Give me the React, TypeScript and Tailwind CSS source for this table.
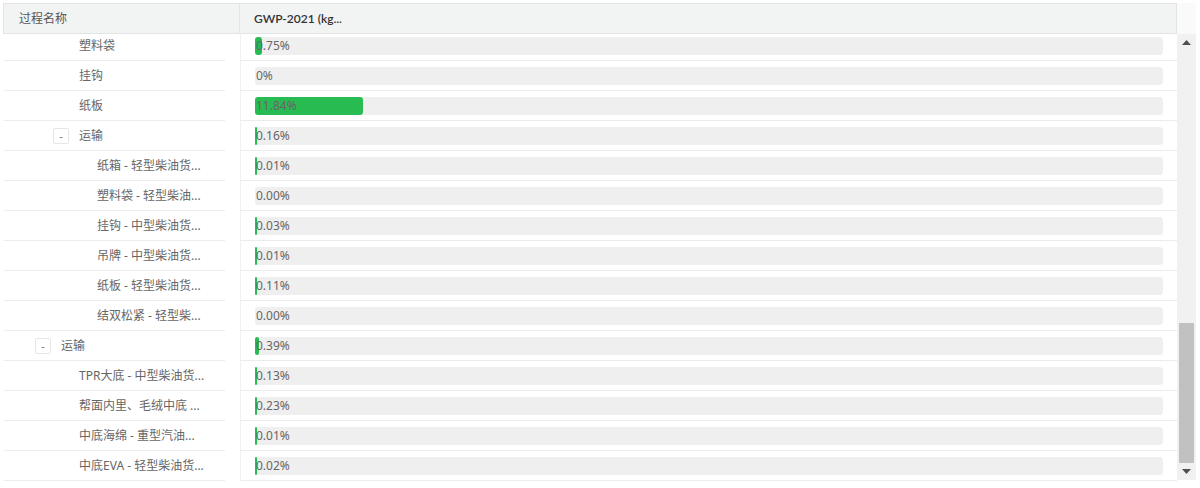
import React from "react";

type Row = { name: string; left: number; toggle?: boolean; pct: string };

const rows: Row[] = [
  { name: "塑料袋", left: 79, pct: "0.75%" },
  { name: "挂钩", left: 79, pct: "0%" },
  { name: "纸板", left: 79, pct: "11.84%" },
  { name: "运输", left: 53, toggle: true, pct: "0.16%" },
  { name: "纸箱 - 轻型柴油货...", left: 97, pct: "0.01%" },
  { name: "塑料袋 - 轻型柴油...", left: 97, pct: "0.00%" },
  { name: "挂钩 - 中型柴油货...", left: 97, pct: "0.03%" },
  { name: "吊牌 - 中型柴油货...", left: 97, pct: "0.01%" },
  { name: "纸板 - 轻型柴油货...", left: 97, pct: "0.11%" },
  { name: "结双松紧 - 轻型柴...", left: 97, pct: "0.00%" },
  { name: "运输", left: 35, toggle: true, pct: "0.39%" },
  { name: "TPR大底 - 中型柴油货...", left: 79, pct: "0.13%" },
  { name: "帮面内里、毛绒中底 ...", left: 79, pct: "0.23%" },
  { name: "中底海绵 - 重型汽油...", left: 79, pct: "0.01%" },
  { name: "中底EVA - 轻型柴油货...", left: 79, pct: "0.02%" },
];

const BAR_W = 908;

function NameCell({ r }: { r: Row }) {
  const indent = r.left - 4;
  return (
    <div className="w-[236px] shrink-0 h-full">
      <div className="w-[221px] h-full border-b border-[#ececec] flex items-center overflow-hidden whitespace-nowrap">
        {r.toggle ? (
          <div className="flex items-center" style={{ paddingLeft: indent }}>
            <span className="w-[16px] h-[16px] border border-[#e6e6e6] rounded-[2px] flex items-center justify-center text-[11px] leading-none text-[#777] bg-white">
              -
            </span>
            <span className="ml-[10px] text-[12px] text-[#666]">{r.name}</span>
          </div>
        ) : (
          <span className="text-[12px] text-[#666]" style={{ paddingLeft: indent }}>
            {r.name}
          </span>
        )}
      </div>
    </div>
  );
}

function BarCell({ pct }: { pct: string }) {
  const v = parseFloat(pct);
  const w = v > 0 ? Math.max(2, (v / 100) * BAR_W) : 0;
  return (
    <div className="flex-1 h-full border-l border-[#f1f1f1] border-b border-b-[#ececec] flex items-center pl-[14px] pr-[14px]">
      <div className="relative w-full h-[18px] rounded-[4px] bg-[#efefef]">
        {w > 0 && (
          <div
            className="absolute left-0 top-0 h-full rounded-[3px] bg-[#27bb52]"
            style={{ width: w }}
          />
        )}
        <span className="absolute left-[1px] top-0 h-full flex items-center text-[12px] text-[#666] leading-none">
          {pct}
        </span>
      </div>
    </div>
  );
}

export default function App() {
  return (
    <div
      className="w-[1200px] h-[488px] bg-white overflow-hidden pt-[3px] pl-[3px]"
      style={{ fontFamily: '"Segoe UI", "Noto Sans", "Noto Sans CJK SC", sans-serif' }}
    >
      <div className="flex">
        <div className="w-[1174px] shrink-0">
          {/* header */}
          <div className="h-[31px] flex bg-[#f2f3f3] border border-[#e3e4e4]">
            <div className="w-[236px] shrink-0 border-r border-[#e3e4e4] flex items-center pl-[15px] text-[12px] text-[#555]">
              过程名称
            </div>
            <div
              className="flex-1 flex items-center pl-[14px] text-[12px] font-semibold text-[#333]"
              style={{ fontFamily: 'Lato, "Noto Sans", sans-serif' }}
            >
              GWP-2021 (kg...
            </div>
          </div>
          {/* body */}
          <div className="h-[448px] overflow-hidden pl-[1px]">
            <div className="-mt-[3px]">
              {rows.map((r, i) => (
                <div key={i} className="h-[30px] flex">
                  <NameCell r={r} />
                  <BarCell pct={r.pct} />
                </div>
              ))}
            </div>
          </div>
        </div>
        {/* scrollbar */}
        <div className="w-[19px] shrink-0 flex flex-col">
          <div className="h-[31px] bg-[#fafafa]" />
          <div className="h-[446px] bg-[#f1f1f1] flex flex-col items-center">
            <div className="h-[17px] w-full flex items-center justify-center">
              <svg width="9" height="5" viewBox="0 0 9 5">
                <polygon points="4.5,0 9,5 0,5" fill="#505050" />
              </svg>
            </div>
            <div className="flex-1 w-full" />
            <div className="h-[140px] w-[15px] bg-[#c1c1c1]" />
            <div className="h-[17px] w-full flex items-center justify-center">
              <svg width="9" height="5" viewBox="0 0 9 5">
                <polygon points="0,0 9,0 4.5,5" fill="#505050" />
              </svg>
            </div>
          </div>
        </div>
      </div>
    </div>
  );
}
